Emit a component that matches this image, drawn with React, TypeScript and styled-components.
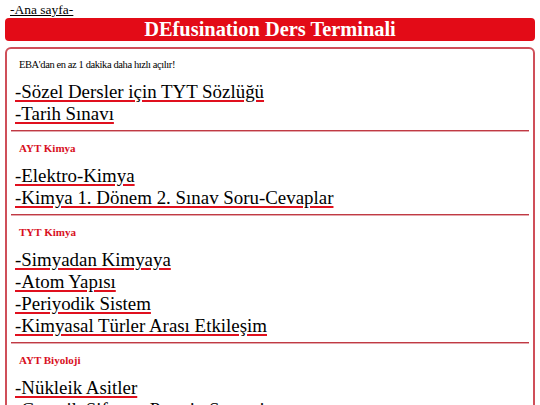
import React from 'react';
import styled, { createGlobalStyle } from 'styled-components';

const GlobalStyle = createGlobalStyle`
    body {
        margin: 0;
        background: #fff;
        font-family: "Liberation Serif", "Times New Roman", serif;
        color: #000;
    }
`;

const Page = styled.div`
    padding: 0 5px;
`;

const HomeLink = styled.a`
    display: inline-block;
    margin-left: 5px;
    font-size: 13.5px;
    line-height: 17px;
    color: #000;
    text-decoration: underline;
`;

const TitleBar = styled.h1`
    margin: 0;
    background: #e30b17;
    color: #fff;
    font-size: 20.4px;
    font-weight: bold;
    line-height: 23px;
    text-align: center;
    border-radius: 4px;
`;

const Panel = styled.div`
    margin-top: 6px;
    border: 2px solid #cf4f59;
    border-radius: 6px;
    padding: 2px 4px 10px;
`;

const Note = styled.p`
    margin: 4px 0 0 8px;
    font-size: 10.5px;
    letter-spacing: -0.4px;
    line-height: 20px;
`;

const Section = styled.div`
    padding: 0;
`;

const SectionTitle = styled.h4`
    margin: 7px 0 0 8px;
    font-size: 11px;
    line-height: 18px;
    font-weight: bold;
    color: #d8101e;
`;

const LinkList = styled.div<{ $top: number }>`
    display: flex;
    flex-direction: column;
    align-items: flex-start;
    margin-top: ${(p) => p.$top}px;
    padding-left: 4px;
`;

const TopicLink = styled.a`
    font-size: 18.9px;
    line-height: 22px;
    color: #000;
    text-decoration: underline;
    text-decoration-color: #e0101e;
    text-decoration-thickness: 2px;
    text-underline-offset: 2px;
`;

const Rule = styled.hr`
    margin: 5px 0 0;
    border: 0;
    border-top: 1px solid #c03a44;
    border-bottom: 1px solid #e4a8ad;
`;

const sections = [
    {
        title: '',
        links: ['-Sözel Dersler için TYT Sözlüğü', '-Tarih Sınavı'],
    },
    {
        title: 'AYT Kimya',
        links: ['-Elektro-Kimya', '-Kimya 1. Dönem 2. Sınav Soru-Cevaplar'],
    },
    {
        title: 'TYT Kimya',
        links: ['-Simyadan Kimyaya', '-Atom Yapısı', '-Periyodik Sistem', '-Kimyasal Türler Arası Etkileşim'],
    },
    {
        title: 'AYT Biyoloji',
        links: ['-Nükleik Asitler', '-Genetik Şifre ve Protein Sentezi'],
    },
];

const App: React.FC = () => {
    return (
        <Page>
            <GlobalStyle />
            <HomeLink href="#">-Ana sayfa-</HomeLink>
            <TitleBar>DEfusination Ders Terminali</TitleBar>
            <Panel>
                <Note>EBA'dan en az 1 dakika daha hızlı açılır!</Note>
                {sections.map((s, i) => (
                    <Section key={i}>
                        {s.title && <SectionTitle>{s.title}</SectionTitle>}
                        <LinkList $top={s.title ? 8 : 6}>
                            {s.links.map((l) => (
                                <TopicLink key={l} href="#">
                                    {l}
                                </TopicLink>
                            ))}
                        </LinkList>
                        <Rule />
                    </Section>
                ))}
            </Panel>
        </Page>
    );
};

export default App;
